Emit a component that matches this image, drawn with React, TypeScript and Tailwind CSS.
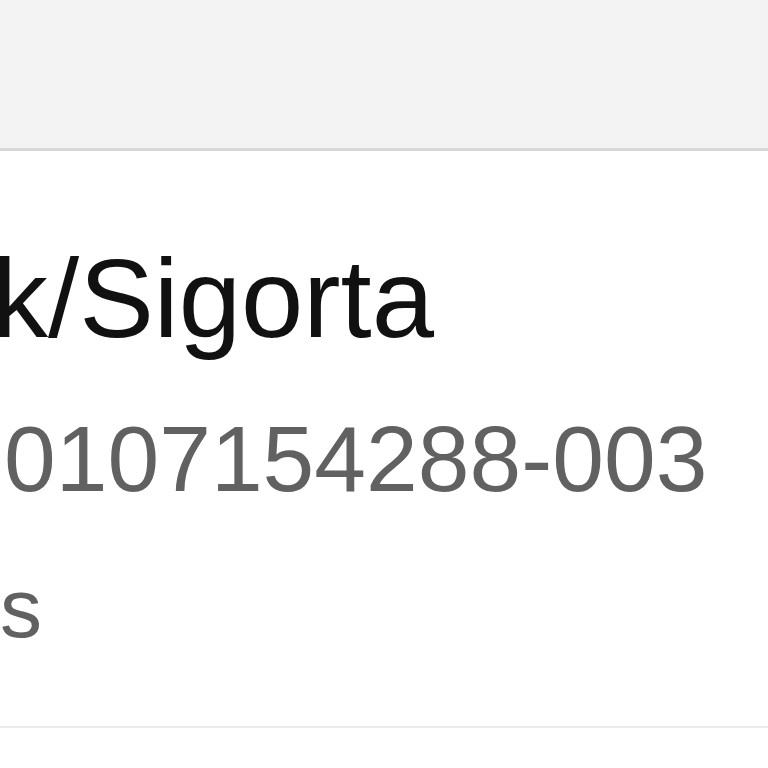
export default function App() {
  return (
    <div className="w-[768px] h-[768px] overflow-hidden bg-white" style={{ fontFamily: '"Liberation Sans", Arial, sans-serif' }}>
      {/* Header band */}
      <div className="h-[151px] bg-[#f3f3f3] border-b-[3px] border-[#d8d8d8]" />

      {/* Row content, clipped on the left */}
      <div className="h-[577px] border-b-2 border-[#ebebeb] flex flex-col pt-[92px]">
        <div className="flex justify-end w-[434px] h-[112px] text-[112px] leading-[112px] text-[#111111] whitespace-nowrap">
          Emeklilik/Sigorta
        </div>
        <div className="mt-[58px] ml-[4px] h-[93px] text-[93px] leading-[93px] text-[#616161] whitespace-nowrap">
          0107154288-003
        </div>
        <div className="mt-[60px] flex justify-end w-[42px] h-[84px] text-[84px] leading-[84px] text-[#616161] whitespace-nowrap">
          Bonus
        </div>
      </div>
    </div>
  );
}
